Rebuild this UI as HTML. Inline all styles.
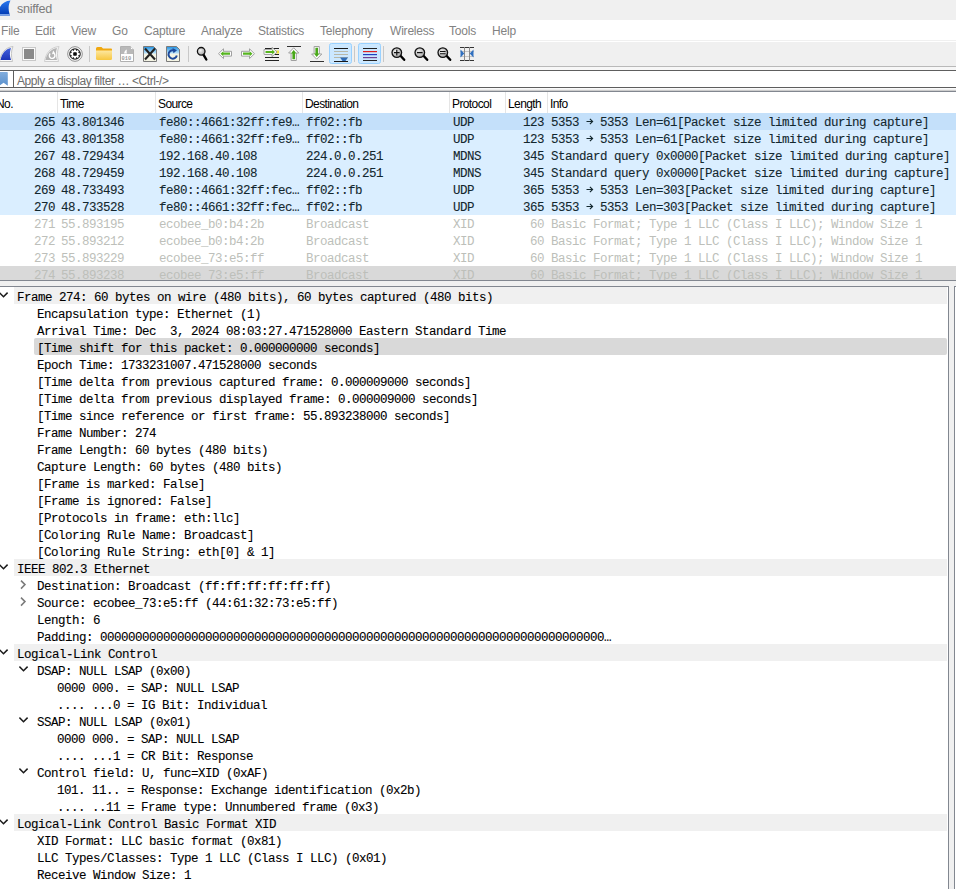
<!DOCTYPE html><html><head><meta charset="utf-8"><style>
html,body{margin:0;padding:0;}
body{width:956px;height:889px;overflow:hidden;position:relative;background:#f0f0f0;font-family:"Liberation Sans",sans-serif;}
.a{position:absolute;}
.ui{font-size:12px;white-space:pre;}
.mono{font-family:"Liberation Mono",monospace;font-size:12.5px;letter-spacing:-0.5px;line-height:17px;white-space:pre;-webkit-text-stroke:0.1px currentColor;}
</style></head><body>
<div class="a" style="left:0;top:0;width:956px;height:20px;background:#f0f0f0"></div>
<div class="a ui" style="left:17px;top:2px;color:#7c7c7c;font-size:12.6px;letter-spacing:-0.25px">sniffed</div>
<svg class="a" style="left:0;top:0" width="12" height="17" viewBox="0 0 12 17"><defs><linearGradient id="gsh" x1="0" y1="0" x2="0" y2="1"><stop offset="0" stop-color="#2a78f0"/><stop offset="1" stop-color="#0038b0"/></linearGradient></defs><path d="M-1 15.5 L-1 9 C1 4 5 1 10.5 0.6 C8.5 4 8 9 9.5 14 L10 15.5 Z" fill="url(#gsh)"/><rect x="0" y="14" width="10" height="1.6" fill="#7aa2e8"/></svg>
<div class="a" style="left:0;top:20px;width:956px;height:20px;background:#fff"></div>
<div class="a ui" style="left:1px;top:24px;color:#828282;letter-spacing:-0.2px">File</div>
<div class="a ui" style="left:35px;top:24px;color:#828282;letter-spacing:-0.2px">Edit</div>
<div class="a ui" style="left:71px;top:24px;color:#828282;letter-spacing:-0.2px">View</div>
<div class="a ui" style="left:112px;top:24px;color:#828282;letter-spacing:-0.2px">Go</div>
<div class="a ui" style="left:144px;top:24px;color:#828282;letter-spacing:-0.2px">Capture</div>
<div class="a ui" style="left:201px;top:24px;color:#828282;letter-spacing:-0.2px">Analyze</div>
<div class="a ui" style="left:258px;top:24px;color:#828282;letter-spacing:-0.2px">Statistics</div>
<div class="a ui" style="left:320px;top:24px;color:#828282;letter-spacing:-0.2px">Telephony</div>
<div class="a ui" style="left:390px;top:24px;color:#828282;letter-spacing:-0.2px">Wireless</div>
<div class="a ui" style="left:449px;top:24px;color:#828282;letter-spacing:-0.2px">Tools</div>
<div class="a ui" style="left:492px;top:24px;color:#828282;letter-spacing:-0.2px">Help</div>
<div class="a" style="left:0;top:41px;width:956px;height:1px;background:#fff"></div>

<svg class="a" style="left:0;top:0" width="490" height="70" viewBox="0 0 490 70">
<defs>
<linearGradient id="gblue" x1="0" y1="0" x2="0" y2="1"><stop offset="0" stop-color="#4462dc"/><stop offset="1" stop-color="#1d34b8"/></linearGradient>
<linearGradient id="gfold" x1="0" y1="0" x2="0" y2="1"><stop offset="0" stop-color="#fde7a0"/><stop offset="1" stop-color="#f7c740"/></linearGradient>
<linearGradient id="gdoc" x1="0" y1="0" x2="0" y2="1"><stop offset="0" stop-color="#1e8fe0"/><stop offset="0.45" stop-color="#bfe4fa"/><stop offset="0.5" stop-color="#f4f4e4"/><stop offset="1" stop-color="#f4f4e4"/></linearGradient>
<radialGradient id="glens" cx="0.4" cy="0.4" r="0.6"><stop offset="0" stop-color="#f4f4f4"/><stop offset="1" stop-color="#a8a8a8"/></radialGradient>
</defs>
<!-- shark fin -->
<path d="M-0.5 61.5 C1 53 5 47.5 13 46.5 C11 51 11 56 12.5 61.5 Z" fill="#fafafa" stroke="#c4c4c4" stroke-width="1"/>
<path d="M0.5 60 C2 53 5.5 49 11 48 C9.5 52 9.5 56 11 60 Z" fill="url(#gblue)"/>
<!-- stop -->
<rect x="22.5" y="47.5" width="13" height="13" fill="#fbfbfb" stroke="#c8c8c8"/>
<rect x="24" y="49" width="10" height="10" fill="#8a8a8a"/>
<!-- restart fin greyed -->
<path d="M44.5 61.5 C46 53 50 47.5 59 46.5 C57 51 57 56 58.5 61.5 Z" fill="#f7f7f7" stroke="#cfcfcf" stroke-width="1"/>
<path d="M45.5 60 C47 53 51 49 57 48 C55.5 52 55.5 56 57 60 Z" fill="#b4b4b4"/>
<path d="M53.6 53.2 A2.8 2.8 0 1 1 50.2 53.6" fill="none" stroke="#fff" stroke-width="1.4"/><path d="M53.2 50.6 L55.2 53.6 L52 54.2 Z" fill="#fff"/>
<!-- gear -->
<circle cx="75" cy="54" r="7.3" fill="#fff" stroke="#8f8f8f" stroke-width="1"/>
<circle cx="75" cy="54" r="5.8" fill="#262626"/>
<path d="M73.85 50.80 L74.12 49.38 L75.88 49.38 L76.15 50.80 L76.45 50.92 L77.64 50.11 L78.89 51.36 L78.08 52.55 L78.20 52.85 L79.62 53.12 L79.62 54.88 L78.20 55.15 L78.08 55.45 L78.89 56.64 L77.64 57.89 L76.45 57.08 L76.15 57.20 L75.88 58.62 L74.12 58.62 L73.85 57.20 L73.55 57.08 L72.36 57.89 L71.11 56.64 L71.92 55.45 L71.80 55.15 L70.38 54.88 L70.38 53.12 L71.80 52.85 L71.92 52.55 L71.11 51.36 L72.36 50.11 L73.55 50.92 Z" fill="#fff"/>
<rect x="73.2" y="52.2" width="3.6" height="3.6" rx="0.8" fill="#0a0a0a"/>
<!-- sep -->
<rect x="89" y="46" width="1" height="16" fill="#c8c8c8"/>
<!-- folder -->
<path d="M96 48.5 Q96 47 97.5 47 L101.5 47 L103 48.5 L111 48.5 Q112 48.5 112 49.5 L112 51 L96 51 Z" fill="#f0a810"/>
<path d="M96 50.5 L112 50.5 L112 58.5 Q112 60 110.5 60 L97.5 60 Q96 60 96 58.5 Z" fill="url(#gfold)"/>
<!-- file 010 -->
<path d="M120.5 46.5 L130.5 46.5 L133.5 49.5 L133.5 61.5 L120.5 61.5 Z" fill="#fff" stroke="#b0b0b0"/>
<path d="M121 47 L130.3 47 L133 49.7 L133 54 L121 54 Z" fill="#b8b8b8"/>
<path d="M130.5 46.5 L130.5 49.5 L133.5 49.5" fill="#fff" stroke="#b0b0b0" stroke-width="0.8"/>
<path d="M124 53.5 C124.5 51 125.5 50 127 49.5 C126.5 51 126.5 52 127 53.5 Z" fill="#fff"/>
<text x="121.6" y="59.6" font-family="Liberation Mono" font-size="5.4" fill="#9a9a9a" font-weight="bold">010</text>
<!-- close -->
<path d="M143.5 46.5 L153.5 46.5 L156.5 49.5 L156.5 61.5 L143.5 61.5 Z" fill="url(#gdoc)" stroke="#7a7a7a"/>
<path d="M145 48.5 L155 59.5 M155 48.5 L145 59.5" stroke="#222" stroke-width="2.1"/>
<!-- reload -->
<path d="M166.5 46.5 L176.5 46.5 L179.5 49.5 L179.5 61.5 L166.5 61.5 Z" fill="url(#gdoc)" stroke="#7a7a7a"/>
<path d="M176.8 55.5 A4.2 4.2 0 1 1 174.5 50.6" fill="none" stroke="#1d4a9c" stroke-width="2"/>
<path d="M172.5 48 L177 50.2 L173.5 53.2 Z" fill="#1d4a9c"/>
<!-- sep -->
<rect x="188" y="46" width="1" height="16" fill="#c8c8c8"/>
<!-- magnifier -->
<path d="M203.3 54.3 L206.3 59.5" stroke="#000" stroke-width="2.4" stroke-linecap="round"/>
<circle cx="201.2" cy="51.3" r="3.8" fill="url(#glens)" stroke="#111" stroke-width="1.3"/>
<!-- left arrow -->
<path d="M218.5 53.7 L223.5 48.8 L223.5 51.3 L231.5 51.3 L231.5 56.1 L223.5 56.1 L223.5 58.6 Z" fill="#fff" stroke="#a0a0a0" stroke-width="1"/>
<path d="M220.5 53.7 L223.3 51.2 L223.3 52.6 L230 52.6 L230 54.8 L223.3 54.8 L223.3 56.2 Z" fill="#56b420"/>
<!-- right arrow -->
<path d="M254.5 53.7 L249.5 48.8 L249.5 51.3 L241.5 51.3 L241.5 56.1 L249.5 56.1 L249.5 58.6 Z" fill="#fff" stroke="#a0a0a0" stroke-width="1"/>
<path d="M252.5 53.7 L249.7 51.2 L249.7 52.6 L243 52.6 L243 54.8 L249.7 54.8 L249.7 56.2 Z" fill="#56b420"/>
<!-- jump to packet -->
<rect x="265" y="48" width="14" height="1" fill="#222"/>
<rect x="276" y="50.5" width="3" height="3" fill="#f2e040"/>
<rect x="265" y="54" width="14" height="1" fill="#222"/>
<rect x="265" y="57" width="14" height="1" fill="#222"/>
<rect x="265" y="60" width="14" height="1" fill="#222"/>
<path d="M277 52 L272 47.3 L272 49.6 L264 49.6 L264 54.4 L272 54.4 L272 56.7 Z" fill="#fff" stroke="#a0a0a0" stroke-width="1"/>
<path d="M275 52 L272.2 49.5 L272.2 50.9 L265.5 50.9 L265.5 53.1 L272.2 53.1 L272.2 54.5 Z" fill="#56b420"/>
<!-- first packet (up) -->
<rect x="287" y="46" width="14" height="1" fill="#333"/>
<path d="M293.7 47.8 L298.8 53 L296.3 53 L296.3 60.5 L291.1 60.5 L291.1 53 L288.6 53 Z" fill="#fff" stroke="#a0a0a0" stroke-width="1"/>
<path d="M293.7 50 L296.5 53.5 L295 53.5 L295 59.2 L292.4 59.2 L292.4 53.5 L290.9 53.5 Z" fill="#4aa81a"/>
<!-- last packet (down) -->
<rect x="310" y="61" width="14" height="1" fill="#333"/>
<path d="M316.7 59.2 L321.8 54 L319.3 54 L319.3 46.5 L314.1 46.5 L314.1 54 L311.6 54 Z" fill="#fff" stroke="#a0a0a0" stroke-width="1"/>
<path d="M316.7 57 L319.5 53.5 L318 53.5 L318 47.8 L315.4 47.8 L315.4 53.5 L313.9 53.5 Z" fill="#4aa81a"/>
<!-- autoscroll button -->
<rect x="329.5" y="43.5" width="22" height="20" rx="2" fill="#cce8ff" stroke="#99d1ff"/>
<rect x="334" y="48" width="14" height="1" fill="#1a1a1a"/>
<rect x="334" y="51" width="14" height="1" fill="#b8b8a8"/>
<rect x="334" y="54" width="14" height="1" fill="#b8b8a8"/>
<rect x="334" y="57" width="14" height="1" fill="#b8b8a8"/>
<rect x="334" y="61" width="14" height="1" fill="#1a1a1a"/>
<path d="M340 57.5 L348 57.5 L345.5 61 L342.5 61 Z" fill="#2f6db8"/>
<!-- sep -->
<rect x="354" y="46" width="1" height="16" fill="#c8c8c8"/>
<!-- colorize button -->
<rect x="358.5" y="43.5" width="22" height="20" rx="2" fill="#cce8ff" stroke="#99d1ff"/>
<rect x="363" y="48" width="14" height="1" fill="#222"/>
<rect x="363" y="51" width="14" height="1.2" fill="#e02020"/>
<rect x="363" y="54" width="14" height="1.2" fill="#2040c0"/>
<rect x="363" y="57" width="14" height="1.2" fill="#704090"/>
<rect x="363" y="60" width="14" height="1" fill="#222"/>
<!-- sep -->
<rect x="383" y="46" width="1" height="16" fill="#c8c8c8"/>
<!-- zoom in/out/normal -->
<g>
<path d="M400.5 55.8 L404.2 59.8" stroke="#000" stroke-width="2.4" stroke-linecap="round"/>
<circle cx="396.8" cy="52.6" r="4.8" fill="url(#glens)" stroke="#111" stroke-width="1.3"/>
<path d="M394 52.6 L399.6 52.6 M396.8 49.8 L396.8 55.4" stroke="#111" stroke-width="1.2"/>
</g>
<g>
<path d="M423.5 55.8 L427.2 59.8" stroke="#000" stroke-width="2.4" stroke-linecap="round"/>
<circle cx="419.8" cy="52.6" r="4.8" fill="url(#glens)" stroke="#111" stroke-width="1.3"/>
<path d="M417 52.6 L422.6 52.6" stroke="#111" stroke-width="1.3"/>
</g>
<g>
<path d="M446.5 55.8 L450.2 59.8" stroke="#000" stroke-width="2.4" stroke-linecap="round"/>
<circle cx="442.8" cy="52.6" r="4.8" fill="url(#glens)" stroke="#111" stroke-width="1.3"/>
<path d="M440 51.5 L445.6 51.5 M440 53.8 L445.6 53.8" stroke="#111" stroke-width="1.1"/>
</g>
<!-- resize columns -->
<rect x="460" y="47" width="14" height="1" fill="#333"/>
<rect x="460" y="60" width="14" height="1" fill="#333"/>
<rect x="460" y="51" width="14" height="1" fill="#c4c4c4"/>
<rect x="460" y="56" width="14" height="1" fill="#c4c4c4"/>
<rect x="464" y="47" width="1" height="14" fill="#8a8a8a"/>
<rect x="469" y="47" width="1" height="14" fill="#8a8a8a"/>
<path d="M460.5 49.5 L464.3 53.5 L460.5 57.5 Z" fill="#3070c0"/>
<path d="M473.5 49.5 L469.7 53.5 L473.5 57.5 Z" fill="#3070c0"/>
</svg>

<div class="a" style="left:0;top:66px;width:956px;height:1px;background:#b9b9b9"></div>
<div class="a" style="left:0;top:67px;width:956px;height:3px;background:#f7f7f7"></div>
<div class="a" style="left:0;top:70px;width:956px;height:18px;background:#fff;border-top:1px solid #5e5e5e;border-bottom:1px solid #5e5e5e;box-sizing:border-box"></div>
<div class="a" style="left:13px;top:70px;width:1px;height:18px;background:#5e5e5e"></div>
<svg class="a" style="left:0;top:72px" width="9" height="15" viewBox="0 0 9 15"><defs><linearGradient id="gbm" x1="0" y1="0" x2="0" y2="1"><stop offset="0" stop-color="#82aede"/><stop offset="1" stop-color="#5a90cc"/></linearGradient></defs><path d="M-1 0.5 Q-1 0 0 0 L7 0 Q7.8 0 7.8 0.8 L7.8 13.8 L3.6 10.8 L-1 13.8 Z" fill="url(#gbm)"/></svg>
<div class="a" style="left:0;top:88px;width:956px;height:1px;background:#fafafa"></div>
<div class="a" style="left:0;top:89px;width:956px;height:1px;background:#efefef"></div>
<div class="a" style="left:0;top:90px;width:956px;height:1px;background:#cdcdcd"></div>
<div class="a ui" style="left:17px;top:74px;color:#6d6d6d;letter-spacing:-0.42px">Apply a display filter … &lt;Ctrl-/&gt;</div>
<div class="a" style="left:0;top:91px;width:956px;height:190px;background:#fff;border-top:1px solid #828790;border-bottom:1px solid #828790;box-sizing:border-box"></div>
<div class="a ui" style="left:-4px;top:97px;color:#000;font-size:12px;letter-spacing:-0.6px">No.</div>
<div class="a ui" style="left:60px;top:97px;color:#000;font-size:12px;letter-spacing:-0.6px">Time</div>
<div class="a ui" style="left:158px;top:97px;color:#000;font-size:12px;letter-spacing:-0.6px">Source</div>
<div class="a ui" style="left:305px;top:97px;color:#000;font-size:12px;letter-spacing:-0.6px">Destination</div>
<div class="a ui" style="left:452px;top:97px;color:#000;font-size:12px;letter-spacing:-0.6px">Protocol</div>
<div class="a ui" style="left:508px;top:97px;color:#000;font-size:12px;letter-spacing:-0.6px">Length</div>
<div class="a ui" style="left:550px;top:97px;color:#000;font-size:12px;letter-spacing:-0.6px">Info</div>
<div class="a" style="left:57px;top:92px;width:1px;height:21px;background:#e5e5e5"></div>
<div class="a" style="left:155px;top:92px;width:1px;height:21px;background:#e5e5e5"></div>
<div class="a" style="left:302px;top:92px;width:1px;height:21px;background:#e5e5e5"></div>
<div class="a" style="left:449px;top:92px;width:1px;height:21px;background:#e5e5e5"></div>
<div class="a" style="left:505px;top:92px;width:1px;height:21px;background:#e5e5e5"></div>
<div class="a" style="left:547px;top:92px;width:1px;height:21px;background:#e5e5e5"></div>
<div class="a" style="left:0;top:113px;width:956px;height:17px;background:#c4e0fa;overflow:hidden">
<svg class="a" style="left:586px;top:4px" width="8" height="8" viewBox="0 0 8 8"><path d="M0.5 4.5 L6.6 4.5 M3.9 1.8 L6.6 4.5 L3.9 7.2" fill="none" stroke="#12272e" stroke-width="1.15"/></svg>
<div class="a mono" style="right:901px;top:2px;color:#12272e;">265</div>
<div class="a mono" style="left:61px;top:2px;color:#12272e;">43.801346</div>
<div class="a mono" style="left:159px;top:2px;color:#12272e;">fe80::4661:32ff:fe9…</div>
<div class="a mono" style="left:306px;top:2px;color:#12272e;">ff02::fb</div>
<div class="a mono" style="left:453px;top:2px;color:#12272e;">UDP</div>
<div class="a mono" style="right:412px;top:2px;color:#12272e;">123</div>
<div class="a mono" style="left:551px;top:2px;color:#12272e;">5353   5353 Len=61[Packet size limited during capture]</div>
</div>
<div class="a" style="left:0;top:130px;width:956px;height:17px;background:#daeeff;overflow:hidden">
<svg class="a" style="left:586px;top:4px" width="8" height="8" viewBox="0 0 8 8"><path d="M0.5 4.5 L6.6 4.5 M3.9 1.8 L6.6 4.5 L3.9 7.2" fill="none" stroke="#12272e" stroke-width="1.15"/></svg>
<div class="a mono" style="right:901px;top:2px;color:#12272e;">266</div>
<div class="a mono" style="left:61px;top:2px;color:#12272e;">43.801358</div>
<div class="a mono" style="left:159px;top:2px;color:#12272e;">fe80::4661:32ff:fe9…</div>
<div class="a mono" style="left:306px;top:2px;color:#12272e;">ff02::fb</div>
<div class="a mono" style="left:453px;top:2px;color:#12272e;">UDP</div>
<div class="a mono" style="right:412px;top:2px;color:#12272e;">123</div>
<div class="a mono" style="left:551px;top:2px;color:#12272e;">5353   5353 Len=61[Packet size limited during capture]</div>
</div>
<div class="a" style="left:0;top:147px;width:956px;height:17px;background:#daeeff;overflow:hidden">
<div class="a mono" style="right:901px;top:2px;color:#12272e;">267</div>
<div class="a mono" style="left:61px;top:2px;color:#12272e;">48.729434</div>
<div class="a mono" style="left:159px;top:2px;color:#12272e;">192.168.40.108</div>
<div class="a mono" style="left:306px;top:2px;color:#12272e;">224.0.0.251</div>
<div class="a mono" style="left:453px;top:2px;color:#12272e;">MDNS</div>
<div class="a mono" style="right:412px;top:2px;color:#12272e;">345</div>
<div class="a mono" style="left:551px;top:2px;color:#12272e;">Standard query 0x0000[Packet size limited during capture]</div>
</div>
<div class="a" style="left:0;top:164px;width:956px;height:17px;background:#daeeff;overflow:hidden">
<div class="a mono" style="right:901px;top:2px;color:#12272e;">268</div>
<div class="a mono" style="left:61px;top:2px;color:#12272e;">48.729459</div>
<div class="a mono" style="left:159px;top:2px;color:#12272e;">192.168.40.108</div>
<div class="a mono" style="left:306px;top:2px;color:#12272e;">224.0.0.251</div>
<div class="a mono" style="left:453px;top:2px;color:#12272e;">MDNS</div>
<div class="a mono" style="right:412px;top:2px;color:#12272e;">345</div>
<div class="a mono" style="left:551px;top:2px;color:#12272e;">Standard query 0x0000[Packet size limited during capture]</div>
</div>
<div class="a" style="left:0;top:181px;width:956px;height:17px;background:#daeeff;overflow:hidden">
<svg class="a" style="left:586px;top:4px" width="8" height="8" viewBox="0 0 8 8"><path d="M0.5 4.5 L6.6 4.5 M3.9 1.8 L6.6 4.5 L3.9 7.2" fill="none" stroke="#12272e" stroke-width="1.15"/></svg>
<div class="a mono" style="right:901px;top:2px;color:#12272e;">269</div>
<div class="a mono" style="left:61px;top:2px;color:#12272e;">48.733493</div>
<div class="a mono" style="left:159px;top:2px;color:#12272e;">fe80::4661:32ff:fec…</div>
<div class="a mono" style="left:306px;top:2px;color:#12272e;">ff02::fb</div>
<div class="a mono" style="left:453px;top:2px;color:#12272e;">UDP</div>
<div class="a mono" style="right:412px;top:2px;color:#12272e;">365</div>
<div class="a mono" style="left:551px;top:2px;color:#12272e;">5353   5353 Len=303[Packet size limited during capture]</div>
</div>
<div class="a" style="left:0;top:198px;width:956px;height:17px;background:#daeeff;overflow:hidden">
<svg class="a" style="left:586px;top:4px" width="8" height="8" viewBox="0 0 8 8"><path d="M0.5 4.5 L6.6 4.5 M3.9 1.8 L6.6 4.5 L3.9 7.2" fill="none" stroke="#12272e" stroke-width="1.15"/></svg>
<div class="a mono" style="right:901px;top:2px;color:#12272e;">270</div>
<div class="a mono" style="left:61px;top:2px;color:#12272e;">48.733528</div>
<div class="a mono" style="left:159px;top:2px;color:#12272e;">fe80::4661:32ff:fec…</div>
<div class="a mono" style="left:306px;top:2px;color:#12272e;">ff02::fb</div>
<div class="a mono" style="left:453px;top:2px;color:#12272e;">UDP</div>
<div class="a mono" style="right:412px;top:2px;color:#12272e;">365</div>
<div class="a mono" style="left:551px;top:2px;color:#12272e;">5353   5353 Len=303[Packet size limited during capture]</div>
</div>
<div class="a" style="left:0;top:215px;width:956px;height:17px;background:#ffffff;overflow:hidden">
<div class="a mono" style="right:901px;top:2px;color:#bdbfba;-webkit-text-stroke:0;">271</div>
<div class="a mono" style="left:61px;top:2px;color:#bdbfba;-webkit-text-stroke:0;">55.893195</div>
<div class="a mono" style="left:159px;top:2px;color:#bdbfba;-webkit-text-stroke:0;">ecobee_b0:b4:2b</div>
<div class="a mono" style="left:306px;top:2px;color:#bdbfba;-webkit-text-stroke:0;">Broadcast</div>
<div class="a mono" style="left:453px;top:2px;color:#bdbfba;-webkit-text-stroke:0;">XID</div>
<div class="a mono" style="right:412px;top:2px;color:#bdbfba;-webkit-text-stroke:0;">60</div>
<div class="a mono" style="left:551px;top:2px;color:#bdbfba;-webkit-text-stroke:0;">Basic Format; Type 1 LLC (Class I LLC); Window Size 1</div>
</div>
<div class="a" style="left:0;top:232px;width:956px;height:17px;background:#ffffff;overflow:hidden">
<div class="a mono" style="right:901px;top:2px;color:#bdbfba;-webkit-text-stroke:0;">272</div>
<div class="a mono" style="left:61px;top:2px;color:#bdbfba;-webkit-text-stroke:0;">55.893212</div>
<div class="a mono" style="left:159px;top:2px;color:#bdbfba;-webkit-text-stroke:0;">ecobee_b0:b4:2b</div>
<div class="a mono" style="left:306px;top:2px;color:#bdbfba;-webkit-text-stroke:0;">Broadcast</div>
<div class="a mono" style="left:453px;top:2px;color:#bdbfba;-webkit-text-stroke:0;">XID</div>
<div class="a mono" style="right:412px;top:2px;color:#bdbfba;-webkit-text-stroke:0;">60</div>
<div class="a mono" style="left:551px;top:2px;color:#bdbfba;-webkit-text-stroke:0;">Basic Format; Type 1 LLC (Class I LLC); Window Size 1</div>
</div>
<div class="a" style="left:0;top:249px;width:956px;height:17px;background:#ffffff;overflow:hidden">
<div class="a mono" style="right:901px;top:2px;color:#bdbfba;-webkit-text-stroke:0;">273</div>
<div class="a mono" style="left:61px;top:2px;color:#bdbfba;-webkit-text-stroke:0;">55.893229</div>
<div class="a mono" style="left:159px;top:2px;color:#bdbfba;-webkit-text-stroke:0;">ecobee_73:e5:ff</div>
<div class="a mono" style="left:306px;top:2px;color:#bdbfba;-webkit-text-stroke:0;">Broadcast</div>
<div class="a mono" style="left:453px;top:2px;color:#bdbfba;-webkit-text-stroke:0;">XID</div>
<div class="a mono" style="right:412px;top:2px;color:#bdbfba;-webkit-text-stroke:0;">60</div>
<div class="a mono" style="left:551px;top:2px;color:#bdbfba;-webkit-text-stroke:0;">Basic Format; Type 1 LLC (Class I LLC); Window Size 1</div>
</div>
<div class="a" style="left:0;top:266px;width:956px;height:14px;background:#d9d9d9;overflow:hidden">
<div class="a mono" style="right:901px;top:2px;color:#bdbfba;-webkit-text-stroke:0;">274</div>
<div class="a mono" style="left:61px;top:2px;color:#bdbfba;-webkit-text-stroke:0;">55.893238</div>
<div class="a mono" style="left:159px;top:2px;color:#bdbfba;-webkit-text-stroke:0;">ecobee_73:e5:ff</div>
<div class="a mono" style="left:306px;top:2px;color:#bdbfba;-webkit-text-stroke:0;">Broadcast</div>
<div class="a mono" style="left:453px;top:2px;color:#bdbfba;-webkit-text-stroke:0;">XID</div>
<div class="a mono" style="right:412px;top:2px;color:#bdbfba;-webkit-text-stroke:0;">60</div>
<div class="a mono" style="left:551px;top:2px;color:#bdbfba;-webkit-text-stroke:0;">Basic Format; Type 1 LLC (Class I LLC); Window Size 1</div>
</div>
<div class="a" style="left:0;top:286px;width:949px;height:620px;background:#fff;border:1px solid #828790;border-left:none;box-sizing:border-box"></div>
<div class="a" style="left:954px;top:286px;width:10px;height:620px;background:#fff;border:1px solid #828790;box-sizing:border-box"></div>
<div class="a" style="left:14px;top:287px;width:933px;height:17px;background:#f0f0f0"></div>
<svg class="a" style="left:-1px;top:290px" width="10" height="10" viewBox="0 0 10 10"><path d="M0.4 2.6 L4.5 6.7 L8.6 2.6" fill="none" stroke="#1a1a1a" stroke-width="1.5"/></svg>
<div class="a mono" style="left:17px;top:290px;color:#000">Frame 274: 60 bytes on wire (480 bits), 60 bytes captured (480 bits)</div>
<div class="a mono" style="left:37px;top:307px;color:#000">Encapsulation type: Ethernet (1)</div>
<div class="a mono" style="left:37px;top:324px;color:#000">Arrival Time: Dec  3, 2024 08:03:27.471528000 Eastern Standard Time</div>
<div class="a" style="left:34px;top:338px;width:913px;height:17px;background:#d9d9d9;border-radius:2px"></div>
<div class="a mono" style="left:37px;top:341px;color:#000">[Time shift for this packet: 0.000000000 seconds]</div>
<div class="a mono" style="left:37px;top:358px;color:#000">Epoch Time: 1733231007.471528000 seconds</div>
<div class="a mono" style="left:37px;top:375px;color:#000">[Time delta from previous captured frame: 0.000009000 seconds]</div>
<div class="a mono" style="left:37px;top:392px;color:#000">[Time delta from previous displayed frame: 0.000009000 seconds]</div>
<div class="a mono" style="left:37px;top:409px;color:#000">[Time since reference or first frame: 55.893238000 seconds]</div>
<div class="a mono" style="left:37px;top:426px;color:#000">Frame Number: 274</div>
<div class="a mono" style="left:37px;top:443px;color:#000">Frame Length: 60 bytes (480 bits)</div>
<div class="a mono" style="left:37px;top:460px;color:#000">Capture Length: 60 bytes (480 bits)</div>
<div class="a mono" style="left:37px;top:477px;color:#000">[Frame is marked: False]</div>
<div class="a mono" style="left:37px;top:494px;color:#000">[Frame is ignored: False]</div>
<div class="a mono" style="left:37px;top:511px;color:#000">[Protocols in frame: eth:llc]</div>
<div class="a mono" style="left:37px;top:528px;color:#000">[Coloring Rule Name: Broadcast]</div>
<div class="a mono" style="left:37px;top:545px;color:#000">[Coloring Rule String: eth[0] &amp; 1]</div>
<div class="a" style="left:14px;top:559px;width:933px;height:17px;background:#f0f0f0"></div>
<svg class="a" style="left:-1px;top:562px" width="10" height="10" viewBox="0 0 10 10"><path d="M0.4 2.6 L4.5 6.7 L8.6 2.6" fill="none" stroke="#1a1a1a" stroke-width="1.5"/></svg>
<div class="a mono" style="left:17px;top:562px;color:#000">IEEE 802.3 Ethernet</div>
<svg class="a" style="left:20px;top:580px" width="10" height="10" viewBox="0 0 10 10"><path d="M1 0.6 L5 4.6 L1 8.6" fill="none" stroke="#7a7a7a" stroke-width="1.5"/></svg>
<div class="a mono" style="left:37px;top:579px;color:#000">Destination: Broadcast (ff:ff:ff:ff:ff:ff)</div>
<svg class="a" style="left:20px;top:597px" width="10" height="10" viewBox="0 0 10 10"><path d="M1 0.6 L5 4.6 L1 8.6" fill="none" stroke="#7a7a7a" stroke-width="1.5"/></svg>
<div class="a mono" style="left:37px;top:596px;color:#000">Source: ecobee_73:e5:ff (44:61:32:73:e5:ff)</div>
<div class="a mono" style="left:37px;top:613px;color:#000">Length: 6</div>
<div class="a mono" style="left:37px;top:630px;color:#000">Padding: 000000000000000000000000000000000000000000000000000000000000000000000000…</div>
<div class="a" style="left:14px;top:644px;width:933px;height:17px;background:#f0f0f0"></div>
<svg class="a" style="left:-1px;top:647px" width="10" height="10" viewBox="0 0 10 10"><path d="M0.4 2.6 L4.5 6.7 L8.6 2.6" fill="none" stroke="#1a1a1a" stroke-width="1.5"/></svg>
<div class="a mono" style="left:17px;top:647px;color:#000">Logical-Link Control</div>
<svg class="a" style="left:19px;top:664px" width="10" height="10" viewBox="0 0 10 10"><path d="M0.4 2.6 L4.5 6.7 L8.6 2.6" fill="none" stroke="#1a1a1a" stroke-width="1.5"/></svg>
<div class="a mono" style="left:37px;top:664px;color:#000">DSAP: NULL LSAP (0x00)</div>
<div class="a mono" style="left:57px;top:681px;color:#000">0000 000. = SAP: NULL LSAP</div>
<div class="a mono" style="left:57px;top:698px;color:#000">.... ...0 = IG Bit: Individual</div>
<svg class="a" style="left:19px;top:715px" width="10" height="10" viewBox="0 0 10 10"><path d="M0.4 2.6 L4.5 6.7 L8.6 2.6" fill="none" stroke="#1a1a1a" stroke-width="1.5"/></svg>
<div class="a mono" style="left:37px;top:715px;color:#000">SSAP: NULL LSAP (0x01)</div>
<div class="a mono" style="left:57px;top:732px;color:#000">0000 000. = SAP: NULL LSAP</div>
<div class="a mono" style="left:57px;top:749px;color:#000">.... ...1 = CR Bit: Response</div>
<svg class="a" style="left:19px;top:766px" width="10" height="10" viewBox="0 0 10 10"><path d="M0.4 2.6 L4.5 6.7 L8.6 2.6" fill="none" stroke="#1a1a1a" stroke-width="1.5"/></svg>
<div class="a mono" style="left:37px;top:766px;color:#000">Control field: U, func=XID (0xAF)</div>
<div class="a mono" style="left:57px;top:783px;color:#000">101. 11.. = Response: Exchange identification (0x2b)</div>
<div class="a mono" style="left:57px;top:800px;color:#000">.... ..11 = Frame type: Unnumbered frame (0x3)</div>
<div class="a" style="left:14px;top:814px;width:933px;height:17px;background:#f0f0f0"></div>
<svg class="a" style="left:-1px;top:817px" width="10" height="10" viewBox="0 0 10 10"><path d="M0.4 2.6 L4.5 6.7 L8.6 2.6" fill="none" stroke="#1a1a1a" stroke-width="1.5"/></svg>
<div class="a mono" style="left:17px;top:817px;color:#000">Logical-Link Control Basic Format XID</div>
<div class="a mono" style="left:37px;top:834px;color:#000">XID Format: LLC basic format (0x81)</div>
<div class="a mono" style="left:37px;top:851px;color:#000">LLC Types/Classes: Type 1 LLC (Class I LLC) (0x01)</div>
<div class="a mono" style="left:37px;top:868px;color:#000">Receive Window Size: 1</div>
</body></html>
